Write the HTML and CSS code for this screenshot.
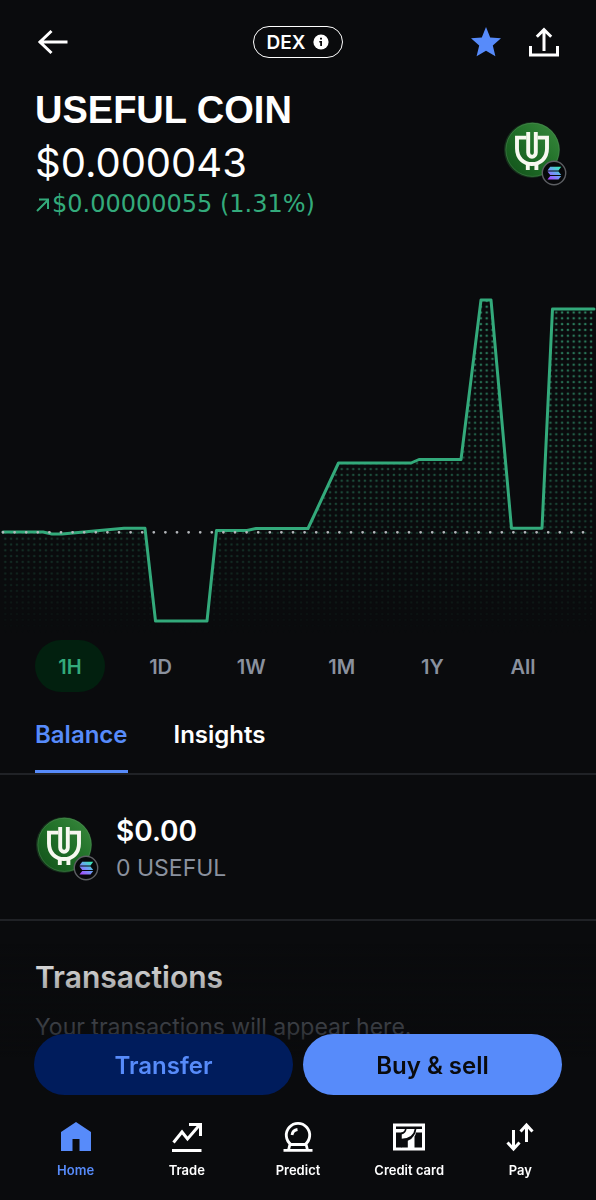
FILE: index.html
```html
<!DOCTYPE html>
<html lang="en">
<head>
<meta charset="utf-8">
<meta name="viewport" content="width=device-width, initial-scale=1">
<title>USEFUL COIN</title>
<link rel="stylesheet" href="styles.css">
</head>
<body>
<svg class="sprite" aria-hidden="true">
  <defs>
    <linearGradient id="coin-green" x1="1" y1="0" x2="0" y2="1">
      <stop offset="0" stop-color="#3a8a3e"/>
      <stop offset="0.5" stop-color="#1f6e27"/>
      <stop offset="1" stop-color="#12501a"/>
    </linearGradient>
    <linearGradient id="sol" gradientUnits="userSpaceOnUse" x1="56" y1="45" x2="46" y2="58">
      <stop offset="0" stop-color="#35efb4"/>
      <stop offset="0.5" stop-color="#6f9cf5"/>
      <stop offset="1" stop-color="#a648ff"/>
    </linearGradient>
    <symbol id="coin" viewBox="0 0 64 64">
      <circle cx="28" cy="28" r="28" fill="#15301b"/>
      <circle cx="28.5" cy="27.8" r="27" fill="url(#coin-green)"/>
      <circle cx="28.5" cy="27.8" r="26.6" fill="none" stroke="#5c8f62" stroke-opacity="0.5" stroke-width="0.8"/>
      <g fill="none" stroke="#f7f8f0" stroke-width="3.9">
        <path d="M22.500 15.6H13V26.500C13 36 19.500 42 28 42S43 36 43 26.500V15.600H33.500"/>
        <path d="M24.200 10V30.500A3.800 4.200 0 0 0 31.800 30.500V10"/>
        <path d="M23.800 41V48M32.400 41V48"/>
      </g>
      <circle cx="50" cy="51" r="11.700" fill="#07080a" stroke="#5d5f63" stroke-width="1.400"/>
      <g fill="url(#sol)">
        <path d="M46.200 44.800H57.200L54.500 48.400H43.500Z"/>
        <path d="M43.500 49.400H54.500L57.200 53H46.200Z"/>
        <path d="M46.200 54H57.200L54.500 57.600H43.500Z"/>
      </g>
    </symbol>
  </defs>
</svg>

<main class="app">
  <header class="topbar">
    <button class="icon-button" aria-label="Back">
      <svg width="32" height="28" viewBox="0 0 32 28" fill="none" stroke="#fff" stroke-width="3"><path d="M2 14H30.500M14.500 3L3 14L14.500 25"/></svg>
    </button>
    <button class="dex">DEX
      <svg width="16" height="16" viewBox="0 0 16 16" aria-hidden="true"><circle cx="8" cy="8" r="7.600" fill="#fff"/><path d="M7 3.800H9V5.600H7ZM6.300 7H9V12H7.200V8.400H6.300Z" fill="#0a0b0d"/></svg>
    </button>
    <div class="actions">
      <button class="icon-button" aria-label="Remove from watchlist">
        <svg width="30" height="30" viewBox="0 0 30 30" fill="#578bfa"><path d="M15 0L19.200 10.500L30 11.300L21.800 18.500L24.400 29.300L15 23.700L5.600 29.300L8.200 18.500L0 11.300L10.800 10.500Z"/></svg>
      </button>
      <button class="icon-button" aria-label="Share">
        <svg width="30" height="30" viewBox="0 0 30 30" fill="none" stroke="#fff" stroke-width="3"><path d="M1.500 19V28H28.500V19M15 24V3M7.800 9.800L15 2.600L22.200 9.800"/></svg>
      </button>
    </div>
  </header>

  <section class="hero">
    <div>
      <h1 class="name">USEFUL COIN</h1>
      <p class="price">$0.000043</p>
      <p class="change"><svg width="15" height="15" viewBox="0 0 15 15" fill="none" stroke="currentColor" stroke-width="2" aria-hidden="true"><path d="M2 14L13 3M4 2.500H13V12"/></svg><span>$0.00000055 (1.31%)</span></p>
    </div>
    <svg class="coin" role="img" aria-label="Useful Coin on Solana"><use href="#coin"/></svg>
  </section>

  <svg class="chart" viewBox="0 290 596 344" role="img" aria-label="Price over the last hour">
    <defs>
      <pattern id="dots" patternUnits="userSpaceOnUse" x="2.400" y="303.800" width="5.800" height="5.800">
        <circle cx="2.900" cy="2.900" r="1.300" fill="#38a97c"/>
      </pattern>
      <linearGradient id="fade" gradientUnits="userSpaceOnUse" x1="0" y1="300" x2="0" y2="634">
        <stop offset="0" stop-color="#fff" stop-opacity="0.750"/>
        <stop offset="0.500" stop-color="#fff" stop-opacity="0.450"/>
        <stop offset="0.750" stop-color="#fff" stop-opacity="0.220"/>
        <stop offset="1" stop-color="#fff" stop-opacity="0"/>
      </linearGradient>
      <mask id="fade-mask" maskUnits="userSpaceOnUse" x="0" y="290" width="596" height="344"><rect y="290" width="596" height="344" fill="url(#fade)"/></mask>
    </defs>
    <path mask="url(#fade-mask)" fill="url(#dots)" d="M2 532H43L52 534H62L124 528H145L155.500 621H207L216.500 530.500H247L256 528.500H308L338.500 463H411L419 459.500H461L481 300H491L511.500 528H542L552.500 309H594V634H2Z"/>
    <path fill="none" stroke="#33aa7b" stroke-width="3" stroke-linejoin="round" stroke-linecap="round" d="M3 532H43L52 534H62L124 528.300H145L155.500 621H207L216.500 530.500H247L256 528.500H308L338.500 463H411L419 459.500H461L481 300H491L511.500 528.300H542L552.500 309H594"/>
    <path fill="none" stroke="#b4b7bb" stroke-width="2.800" stroke-linecap="round" stroke-dasharray="0 11.600" d="M3 532.300H584"/>
  </svg>

  <div class="ranges" role="group" aria-label="Time range">
    <button class="range range-on" aria-pressed="true">1H</button>
    <button class="range">1D</button>
    <button class="range">1W</button>
    <button class="range">1M</button>
    <button class="range">1Y</button>
    <button class="range">All</button>
  </div>

  <div class="tabs" role="tablist">
    <button class="tab tab-on" role="tab" aria-selected="true">Balance</button>
    <button class="tab" role="tab" aria-selected="false">Insights</button>
  </div>

  <section class="balance">
    <svg class="coin" aria-hidden="true"><use href="#coin"/></svg>
    <div>
      <p class="amount">$0.00</p>
      <p class="units">0 USEFUL</p>
    </div>
  </section>

  <section class="transactions">
    <h2 class="heading">Transactions</h2>
    <p class="empty">Your transactions will appear here.</p>
  </section>
</main>

<footer class="dock">
  <div class="dock-fade"></div>
  <div class="cta">
    <button class="button button-secondary">Transfer</button>
    <button class="button button-primary">Buy &amp; sell</button>
  </div>
  <nav class="nav">
    <a class="nav-item nav-on" href="#home">
      <svg width="32" height="32" viewBox="0 0 32 32" fill="currentColor"><path d="M16 1L31 11V30H19.500V18H12.500V30H1V11Z"/></svg>
      Home
    </a>
    <a class="nav-item" href="#trade">
      <svg width="32" height="32" viewBox="0 0 32 32" fill="none" stroke="currentColor" stroke-width="3"><path d="M2.500 21.500L11 11L16.500 18L28.500 4M18 3.500H29.500V15M1 29.500H30.500"/></svg>
      Trade
    </a>
    <a class="nav-item" href="#predict">
      <svg width="32" height="32" viewBox="0 0 32 32" fill="none" stroke="currentColor" stroke-width="2.800"><path d="M9 23.500A11.700 11.700 0 1 1 23 23.500ZM8 23L6.500 29M24 23L25.500 29M1.500 29.300H30.500M10 14A6.500 6.500 0 0 1 15.500 8.500"/></svg>
      Predict
    </a>
    <a class="nav-item" href="#card">
      <svg width="34" height="32" viewBox="0 0 34 32">
        <path fill="currentColor" d="M1 2.500H33V29.500H1Z"/>
        <path fill="#0a0b0d" d="M4 5.500H30V8H4ZM4 11.500H9.500V26.500H4ZM24 11.500H30V26.500H22.500V15.500Q23.600 13.800 24 11.500Z"/>
        <path fill="#0a0b0d" d="M13 7.500H14.700Q14 12.500 9.500 13.500V17.800Q21.500 17.200 22.800 7.500H24.500Q23.800 12.500 22 14.500Q20 18.200 15.800 19.800V26.500H9V11.500Q12.800 11 13 7.500Z"/>
      </svg>
      Credit card
    </a>
    <a class="nav-item" href="#pay">
      <svg width="32" height="32" viewBox="0 0 32 32" fill="none" stroke="currentColor" stroke-width="3"><path d="M9.500 9V28M3.500 21.500L9.500 28L15.500 21.500M22.500 21V4M16.500 10.500L22.500 4L28.500 10.500"/></svg>
      Pay
    </a>
  </nav>
</footer>
</body>
</html>
```

FILE: styles.css
```css
* {
  box-sizing: border-box;
}

body {
  margin: 0;
  background: #0a0b0d;
  color: #fff;
  font-family: Inter, "Liberation Sans", sans-serif;
}

h1,
h2,
p {
  margin: 0;
}

button {
  border: 0;
  padding: 0;
  background: none;
  color: inherit;
  font: inherit;
  cursor: pointer;
}

svg {
  display: block;
  flex: none;
}

.sprite {
  position: absolute;
  width: 0;
  height: 0;
}

.topbar {
  display: grid;
  grid-template-columns: 1fr auto 1fr;
  align-items: center;
  height: 84px;
  padding: 0 37px;
}

.icon-button {
  justify-self: start;
}

.dex {
  display: flex;
  align-items: center;
  gap: 8px;
  height: 32px;
  padding: 0 13px;
  border: 1px solid #fff;
  border-radius: 16px;
  font-size: 19px;
  font-weight: 600;
}

.actions {
  display: flex;
  justify-content: flex-end;
  gap: 28px;
}

.hero {
  display: flex;
  justify-content: space-between;
  align-items: center;
  padding: 0 28px 0 35px;
}

.hero .coin {
  margin-top: 6px;
}

.name {
  font-family: "Liberation Sans", sans-serif;
  font-size: 38px;
  line-height: 52px;
  font-weight: 700;
}

.price {
  font-size: 40px;
  line-height: 54px;
}

.change {
  display: flex;
  align-items: center;
  gap: 2px;
  color: #33aa7b;
  font-family: "DejaVu Sans", sans-serif;
  font-size: 24px;
  line-height: 28px;
}

.coin {
  width: 64px;
  height: 64px;
}

.chart {
  width: 100%;
  margin-top: 72px;
}

.ranges {
  display: flex;
  justify-content: space-between;
  padding: 6px 38px 0 35px;
}

.range {
  width: 70px;
  height: 52px;
  padding-top: 2px;
  border-radius: 26px;
  color: #8a919e;
  font-size: 20px;
  font-weight: 600;
}

.range-on {
  background: #02200f;
  color: #33aa7b;
}

.tabs {
  display: flex;
  gap: 46px;
  height: 83px;
  padding: 0 35px;
  border-bottom: 2px solid #202226;
}

.tab {
  padding-top: 6px;
  border-bottom: 3px solid transparent;
  font-size: 24px;
  font-weight: 600;
}

.tab-on {
  border-color: #578bfa;
  color: #578bfa;
}

.balance {
  display: flex;
  align-items: center;
  gap: 16px;
  height: 146px;
  padding: 4px 36px 0;
  border-bottom: 2px solid #202226;
}

.amount {
  font-size: 28px;
  line-height: 38px;
  font-weight: 600;
}

.units {
  color: #8a919e;
  font-size: 23px;
  line-height: 36px;
}

.transactions {
  padding: 36px 35px 140px;
}

.heading {
  font-size: 30px;
  line-height: 40px;
  font-weight: 600;
}

.empty {
  padding-top: 14px;
  color: #8a919e;
  font-size: 23px;
  line-height: 32px;
}

.dock {
  position: fixed;
  right: 0;
  bottom: 0;
  left: 0;
}

.dock-fade {
  height: 90px;
  background: linear-gradient(rgba(10, 11, 13, 0), rgba(10, 11, 13, 0.7));
  pointer-events: none;
}

.cta {
  display: grid;
  grid-template-columns: 1fr 1fr;
  gap: 10px;
  padding: 0 34px;
  background: linear-gradient(rgba(10, 11, 13, 0.7), #0a0b0d 40%);
}

.button {
  height: 61px;
  padding-top: 2px;
  border-radius: 31px;
  font-size: 24px;
  font-weight: 600;
}

.button-secondary {
  background: #001c5c;
  color: #578bfa;
}

.button-primary {
  background: #578bfa;
  color: #0a0b0d;
}

.nav {
  display: grid;
  grid-template-columns: repeat(5, 1fr);
  padding: 26px 20px 20px;
  background: #0a0b0d;
}

.nav-item {
  display: flex;
  flex-direction: column;
  align-items: center;
  gap: 7px;
  color: #fff;
  font-size: 13px;
  line-height: 20px;
  font-weight: 600;
  text-decoration: none;
}

.nav-on {
  color: #578bfa;
}
```
